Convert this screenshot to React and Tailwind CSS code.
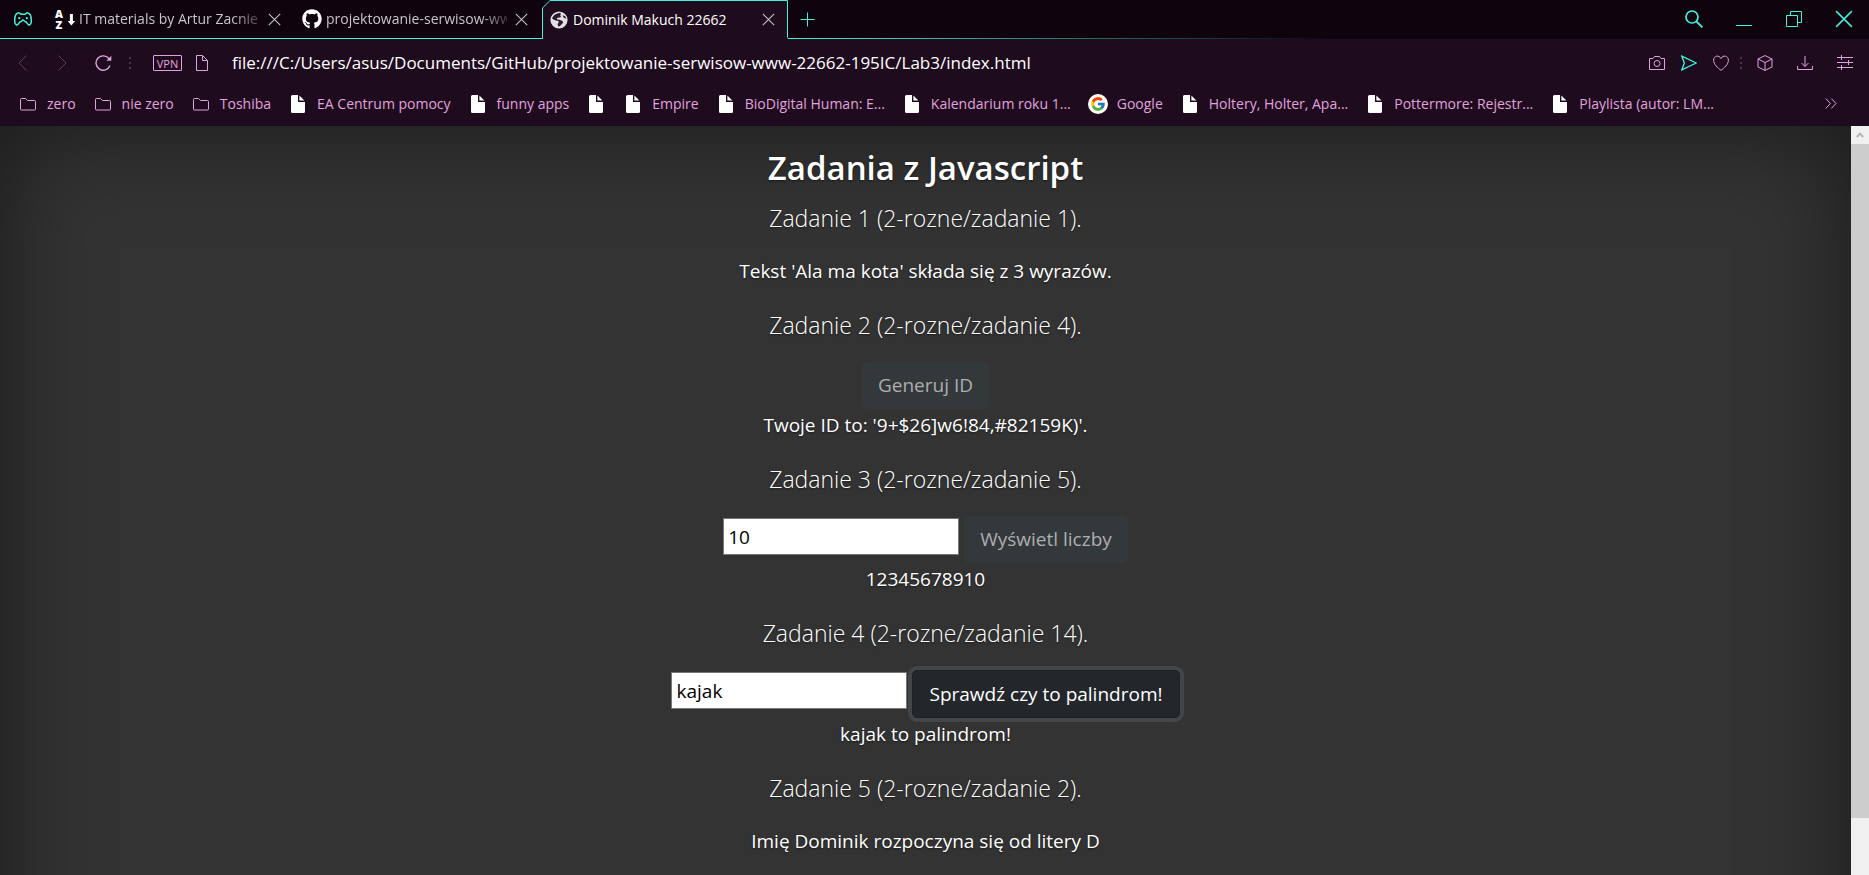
import { FaGithub } from "react-icons/fa";
import { FcGoogle } from "react-icons/fc";

function Icon({ size = "size-4", box = "0 0 16 16", children, className = "" }) {
  return (
    <svg viewBox={box} fill="none" stroke="currentColor" aria-hidden="true" className={`${size} shrink-0 ${className}`}>
      {children}
    </svg>
  );
}

function GamepadIcon() {
  return (
    <svg viewBox="0 0 18 14" fill="none" stroke="currentColor" strokeWidth="1.5" aria-hidden="true" className="h-3.5 w-[18px]">
      <path d="M4 .9 C5.6 .6 6.3 2.2 7.4 2.2 H10.6 C11.7 2.2 12.4 .6 14 .9 C15.9 1.2 17.3 5 17.3 9.3 C17.3 13.4 14.6 13.6 13.4 11.6 C12.6 10.2 12.1 9.5 11 9.5 L9 8 L7 9.5 C5.9 9.5 5.4 10.2 4.6 11.6 C3.4 13.6 .7 13.4 .7 9.3 C.7 5 2.1 1.2 4 .9 Z" />
      <circle cx="5.2" cy="6.2" r="1.1" fill="currentColor" stroke="none" />
      <circle cx="12.8" cy="6.2" r="1.1" fill="currentColor" stroke="none" />
    </svg>
  );
}

function SortIcon() {
  return (
    <svg viewBox="0 0 20 20" aria-hidden="true" className="size-5 overflow-visible text-white">
      <text x="0" y="8.5" fill="currentColor" className="font-['Open_Sans',sans-serif] text-[11px] font-extrabold">A</text>
      <text x="0.5" y="19.5" fill="currentColor" className="font-['Open_Sans',sans-serif] text-[11px] font-extrabold">Z</text>
      <path d="M14.9 5h3v7h2.3l-3.8 4.6-3.8-4.6h2.3z" fill="currentColor" />
    </svg>
  );
}

function GlobeIcon() {
  return (
    <svg viewBox="0 0 20 20" aria-hidden="true" className="size-5">
      <circle cx="10" cy="10" r="8.6" fill="#e3e1e6" />
      <path d="M11.2 2.8 C7 3.4 4.2 5.2 3 8.2 C4.6 9.8 6 10.6 8.6 10.8 C10 11.2 10.2 12.4 9.2 13.2 C8.2 14.2 8.8 16 9.8 16.6 C11.8 16.2 12 14.4 13.4 13.6 C14.8 12.6 14 11 12.2 10.4 C10.8 9.6 9.4 9.6 8 9.2 C7.4 8.2 8.4 7.4 10 7.4 C11.6 7.6 12.4 6.8 11.6 5.8 C10.8 5 12.6 4.2 11.2 2.8 Z" fill="#2b1a2b" />
      <path d="M13.6 5.6 C15.2 5 16.6 6.2 17.2 8.4 C15.6 8.6 14.4 7.8 13.6 5.6 Z" fill="#2b1a2b" />
    </svg>
  );
}

function CrossIcon({ size = "size-[13px]" }) {
  return (
    <Icon size={size}>
      <path d="M1 1 L15 15 M15 1 L1 15" strokeWidth="1.3" />
    </Icon>
  );
}

function FolderIcon() {
  return (
    <Icon>
      <path d="M.5 3.5 a1 1 0 0 1 1-1 H5.5 L7.5 4.5 H14.5 a1 1 0 0 1 1 1 V13 a1 1 0 0 1 -1 1 H1.5 a1 1 0 0 1 -1-1 Z" />
    </Icon>
  );
}

function PageIcon() {
  return (
    <svg viewBox="0 0 14 18" fill="#fff" aria-hidden="true" className="h-[18px] w-3.5">
      <path d="M1.5 0 H7 V7 H14 V16.5 a1.5 1.5 0 0 1 -1.5 1.5 H1.5 A1.5 1.5 0 0 1 0 16.5 V1.5 A1.5 1.5 0 0 1 1.5 0 Z" />
      <path d="M8.4 .6 L13.4 5.6 H8.4 Z" />
    </svg>
  );
}

function Tab({ icon, title, active }) {
  return (
    <div className={`relative flex h-[39px] w-[247px] items-center gap-1 pr-[13px] pl-2 ${active ? "text-white" : "border-b border-[#43f3dc] text-[#c9c4c8]"}`}>
      {active && (
        <svg viewBox="0 0 247 39" aria-hidden="true" className="absolute inset-0 h-[39px] w-[247px]">
          <path d="M0 39 H1.5 V8 L9 .5 H246.5 V39 Z" fill="#1f0b1e" />
          <path d="M0 38.5 H1.5 V8 L9 .5 H246.5 V37.5 L247 38.5" fill="none" stroke="#43f3dc" />
        </svg>
      )}
      <span className="relative flex w-5 shrink-0 justify-center">{icon}</span>
      <a
        href="#"
        className={`relative min-w-0 flex-1 overflow-hidden text-sm whitespace-nowrap ${active ? "" : "[mask-image:linear-gradient(to_right,black_85%,transparent_105%)]"}`}
      >
        {title}
      </a>
      <button type="button" aria-label="Zamknij kartę" className="relative ml-1 text-[#c9c4c8]">
        <CrossIcon />
      </button>
    </div>
  );
}

function TabStrip() {
  return (
    <header className="flex h-[39px] bg-[#0f030e] text-[#43f3dc]">
      <button type="button" aria-label="Menu" className="flex w-[47px] items-center border-b border-[#43f3dc] pl-3.5">
        <GamepadIcon />
      </button>
      <Tab icon={<SortIcon />} title="IT materials by Artur Zacnie" />
      <Tab icon={<FaGithub className="size-5 text-white" />} title="projektowanie-serwisow-ww" />
      <Tab active icon={<GlobeIcon />} title="Dominik Makuch 22662" />
      <div className="flex flex-1 flex-col justify-between">
        <div className="flex flex-1 justify-between">
          <button type="button" aria-label="Nowa karta" className="flex w-[39px] items-center justify-center">
            <Icon size="size-[15px]" box="0 0 15 15">
              <path d="M7.5 .5 V14.5 M.5 7.5 H14.5" />
            </Icon>
          </button>
          <div className="flex *:flex *:w-[50px] *:items-center *:justify-center">
            <button type="button" aria-label="Szukaj">
              <Icon size="size-[18px]" box="0 0 18 18">
                <circle cx="7" cy="7" r="6" strokeWidth="1.7" />
                <path d="M11.4 11.4 L17.4 17.4" strokeWidth="1.9" />
              </Icon>
            </button>
            <button type="button" aria-label="Minimalizuj">
              <Icon>
                <path d="M0 14.5 H16" />
              </Icon>
            </button>
            <button type="button" aria-label="Przywróć">
              <Icon>
                <path d="M.5 4.5 H11.5 V15.5 H.5 Z M4.5 4.5 V.5 H15.5 V11.5 H11.5" />
              </Icon>
            </button>
            <button type="button" aria-label="Zamknij">
              <CrossIcon size="size-[18px]" />
            </button>
          </div>
        </div>
        <div className="h-px w-1/2 bg-linear-to-r from-[#43f3dc] to-transparent" />
      </div>
    </header>
  );
}

function Dots() {
  return (
    <Icon size="h-4 w-2" box="0 0 8 16" className="text-[#54405a]">
      <path d="M4 2 V4 M4 7 V9 M4 12 V14" strokeWidth="1.6" />
    </Icon>
  );
}

function AddressBar() {
  return (
    <div className="flex h-12 items-center bg-[#1f0b1e] pr-1 text-[#e0a3df]">
      <button type="button" aria-label="Wstecz" className="ml-[18px] text-[#5a3b5a]">
        <Icon size="h-4 w-[9px]" box="0 0 9 16">
          <path d="M8.5 .5 L1 8 L8.5 15.5" />
        </Icon>
      </button>
      <button type="button" aria-label="Dalej" className="ml-[31px] text-[#5a3b5a]">
        <Icon size="h-4 w-[9px]" box="0 0 9 16">
          <path d="M.5 .5 L8 8 L.5 15.5" />
        </Icon>
      </button>
      <button type="button" aria-label="Odśwież" className="mr-3.5 ml-7">
        <Icon size="size-[17px]" box="0 0 17 17">
          <path d="M14.2 4 A7.2 7.2 0 1 0 15 10.6" strokeWidth="1.4" />
          <path d="M16.3 .8 V5.8 H11.3 Z" fill="currentColor" stroke="none" />
        </Icon>
      </button>
      <Dots />
      <span className="mr-3.5 ml-[19px] flex h-4 w-[29px] items-center justify-center rounded-[1px] border border-current text-[11px] leading-none">VPN</span>
      <Icon size="h-4 w-3" box="0 0 12 16">
        <path d="M.5 .5 H6.5 L11.5 5.5 V15.5 H.5 Z M6.5 .5 V5.5 H11.5" />
      </Icon>
      <input
        type="text"
        aria-label="Adres"
        defaultValue="file:///C:/Users/asus/Documents/GitHub/projektowanie-serwisow-www-22662-195IC/Lab3/index.html"
        className="ml-6 min-w-0 flex-1 bg-transparent text-[17px] text-white outline-none"
      />
      <div className="flex *:flex *:w-8 *:items-center *:justify-center">
        <button type="button" aria-label="Zrzut ekranu">
          <Icon>
            <path d="M.5 3.5 H4 L5.5 1.5 H10.5 L12 3.5 H15.5 V14.5 H.5 Z" />
            <circle cx="8" cy="8.5" r="3" />
          </Icon>
        </button>
        <button type="button" aria-label="Wyślij" className="text-[#43f3dc]">
          <Icon>
            <path d="M.8 1.2 L15.2 8 L.8 14.8 L3.4 8 Z" strokeWidth="1.3" />
          </Icon>
        </button>
        <button type="button" aria-label="Ulubione">
          <Icon>
            <path d="M8 15.3 C5 13 .6 9.4 .6 5.2 C.6 .6 6.2 -.4 8 3.6 C9.8 -.4 15.4 .6 15.4 5.2 C15.4 9.4 11 13 8 15.3 Z" />
          </Icon>
        </button>
      </div>
      <Dots />
      <div className="flex *:flex *:w-10 *:items-center *:justify-center">
        <button type="button" aria-label="Rozszerzenia">
          <Icon>
            <path d="M8 .6 L15 4 V12 L8 15.4 L1 12 V4 Z M1 4 L8 7.5 L15 4 M8 7.5 V15.4" />
          </Icon>
        </button>
        <button type="button" aria-label="Pobrane">
          <Icon>
            <path d="M8 1 V11.5 M4.5 8 L8 11.5 L11.5 8 M.6 11 V14.5 H15.4 V11" />
          </Icon>
        </button>
        <button type="button" aria-label="Ustawienia">
          <Icon>
            <path d="M0 2.5 H16 M0 7.5 H16 M0 12.5 H16 M4.5 0 V5 M11.5 5 V10 M4.5 10 V15" />
          </Icon>
        </button>
      </div>
    </div>
  );
}

const bookmarks = [
  { kind: "folder", label: "zero" },
  { kind: "folder", label: "nie zero" },
  { kind: "folder", label: "Toshiba" },
  { kind: "page", label: "EA Centrum pomocy" },
  { kind: "page", label: "funny apps" },
  { kind: "page", label: "" },
  { kind: "page", label: "Empire" },
  { kind: "page", label: "BioDigital Human: E..." },
  { kind: "page", label: "Kalendarium roku 1..." },
  { kind: "google", label: "Google" },
  { kind: "page", label: "Holtery, Holter, Apa..." },
  { kind: "page", label: "Pottermore: Rejestr..." },
  { kind: "page", label: "Playlista (autor: LM..." },
];

function BookmarkIcon({ kind }) {
  if (kind === "folder") return <FolderIcon />;
  if (kind === "page") return <PageIcon />;
  return (
    <span className="flex size-5 items-center justify-center rounded-full bg-white">
      <FcGoogle className="size-4" />
    </span>
  );
}

function BookmarksBar() {
  return (
    <nav className="flex h-[39px] items-center bg-[#1f0b1e] pr-8 pb-1.5 pl-[18px] text-sm whitespace-nowrap text-[#e0a3df]">
      <ul className="flex flex-1 gap-[17px]">
        {bookmarks.map(({ kind, label }, i) => (
          <li key={i}>
            <a href="#" aria-label={label || "Zakładka"} className="flex min-h-5 items-center gap-[9px]">
              <span className="flex w-5 justify-center">
                <BookmarkIcon kind={kind} />
              </span>
              {label && <span>{label}</span>}
            </a>
          </li>
        ))}
      </ul>
      <button type="button" aria-label="Więcej zakładek">
        <Icon size="h-[11px] w-3" box="0 0 12 11">
          <path d="M.8 .6 L5.4 5.5 L.8 10.4 M6.4 .6 L11 5.5 L6.4 10.4" />
        </Icon>
      </button>
    </nav>
  );
}

function Task({ title, result, children }) {
  return (
    <section className="flex flex-col items-center">
      <h2 className="mb-[19px] text-[23px] leading-9 font-light">{title}</h2>
      {children && <div className="flex items-start gap-[5px]">{children}</div>}
      <p className="mb-5 leading-8">{result}</p>
    </section>
  );
}

const field = "mt-0.5 h-[37px] w-[236px] border border-[#767676] bg-white px-1 text-black outline-none";
const mutedButton = "h-[47px] rounded-[5px] bg-[#33383b] px-4 text-[#adaeaf]";

function Page() {
  return (
    <main className="min-h-full bg-[#333] pt-[22px] pb-40 text-center text-[19px] text-white shadow-[inset_0_0_100px_rgba(0,0,0,0.5)]">
      <div className="[text-shadow:0_1px_2px_rgba(0,0,0,0.5)]">
        <h1 className="mb-3 text-[33px] leading-10 font-semibold">Zadania z Javascript</h1>
        <Task title="Zadanie 1 (2-rozne/zadanie 1)." result="Tekst 'Ala ma kota' składa się z 3 wyrazów." />
        <Task title="Zadanie 2 (2-rozne/zadanie 4)." result="Twoje ID to: '9+$26]w6!84,#82159K)'.">
          <button type="button" className={mutedButton}>Generuj ID</button>
        </Task>
        <Task title="Zadanie 3 (2-rozne/zadanie 5)." result="12345678910">
          <input type="text" aria-label="Liczba" defaultValue="10" className={field} />
          <button type="button" className={mutedButton}>Wyświetl liczby</button>
        </Task>
        <Task title="Zadanie 4 (2-rozne/zadanie 14)." result="kajak to palindrom!">
          <input type="text" aria-label="Słowo" defaultValue="kajak" className={field} />
          <button type="button" className="h-12 rounded-[5px] border border-[#1d2124] bg-[#23272b] px-4 text-white ring-4 ring-[#424649]">
            Sprawdź czy to palindrom!
          </button>
        </Task>
        <Task title="Zadanie 5 (2-rozne/zadanie 2)." result="Imię Dominik rozpoczyna się od litery D" />
      </div>
    </main>
  );
}

function Scrollbar() {
  return (
    <div aria-hidden="true" className="flex w-[18px] shrink-0 flex-col bg-[#f0f0f0]">
      <div className="flex h-[18px] items-center justify-center text-[#b4b4b4]">
        <Icon size="h-1.5 w-2" box="0 0 8 6">
          <path d="M.8 5 L4 1.6 L7.2 5" strokeWidth="2" />
        </Icon>
      </div>
      <div className="h-9/10 bg-[#cdcdcd]" />
    </div>
  );
}

export default function App() {
  return (
    <div className="flex h-screen flex-col overflow-hidden font-['Open_Sans','Noto_Sans',sans-serif]">
      <TabStrip />
      <AddressBar />
      <BookmarksBar />
      <div className="flex min-h-0 flex-1">
        <div className="min-w-0 flex-1 overflow-hidden">
          <Page />
        </div>
        <Scrollbar />
      </div>
    </div>
  );
}
